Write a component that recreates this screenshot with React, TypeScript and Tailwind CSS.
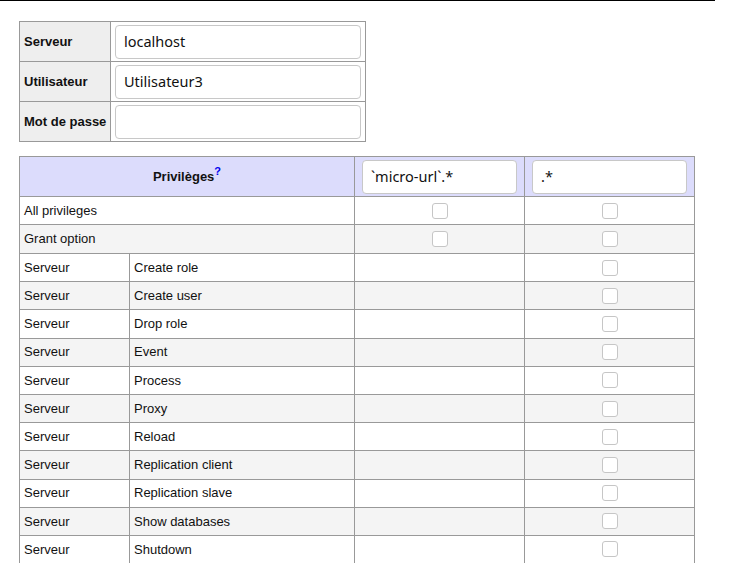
const privileges = [
  'Create role',
  'Create user',
  'Drop role',
  'Event',
  'Process',
  'Proxy',
  'Reload',
  'Replication client',
  'Replication slave',
  'Show databases',
  'Shutdown',
];

function Box() {
  return <div className="mx-auto h-[16px] w-[16px] rounded-[3px] border border-[#c6c6c6] bg-white" />;
}

function Field({ value }: { value: string }) {
  return (
    <div className="flex h-[34px] items-center rounded-[4px] border border-[#c8c8c8] bg-white px-[8px] font-['Noto_Sans',sans-serif] text-[14.5px] text-[#111]">
      {value}
    </div>
  );
}

export default function App() {
  return (
    <div className="min-h-[563px] bg-white font-['Liberation_Sans',Arial,sans-serif] text-[13px] text-[#111]">
      <div className="h-px w-[715px] bg-black" />

      <table className="ml-[19px] mt-[20px] w-[347px] table-fixed border-collapse">
        <colgroup>
          <col className="w-[91px]" />
          <col />
        </colgroup>
        <tbody>
          {[
            ['Serveur', 'localhost'],
            ['Utilisateur', 'Utilisateur3'],
            ['Mot de passe', ''],
          ].map(([label, value]) => (
            <tr key={label} className="h-[40px]">
              <th className="whitespace-nowrap border border-[#999] bg-[#eee] px-[4px] text-left font-bold">{label}</th>
              <td className="border border-[#999] px-[4px]">
                <Field value={value} />
              </td>
            </tr>
          ))}
        </tbody>
      </table>

      <table className="ml-[19px] mt-[14px] w-[676px] table-fixed border-collapse">
        <colgroup>
          <col className="w-[110px]" />
          <col className="w-[225px]" />
          <col className="w-[170px]" />
          <col className="w-[170px]" />
        </colgroup>
        <thead>
          <tr className="h-[40px] bg-[#dcdcfc]">
            <th colSpan={2} className="border border-[#999] font-bold">
              Privilèges<sup className="text-[11px] text-[#00e]">?</sup>
            </th>
            <td className="border border-[#999] px-[7px]">
              <Field value="`micro-url`.*" />
            </td>
            <td className="border border-[#999] px-[7px]">
              <Field value=".*" />
            </td>
          </tr>
        </thead>
        <tbody>
          <tr className="h-[28px] bg-white">
            <td colSpan={2} className="border border-[#999] px-[4px]">All privileges</td>
            <td className="border border-[#999]"><Box /></td>
            <td className="border border-[#999]"><Box /></td>
          </tr>
          <tr className="h-[29px] bg-[#f4f4f4]">
            <td colSpan={2} className="border border-[#999] px-[4px]">Grant option</td>
            <td className="border border-[#999]"><Box /></td>
            <td className="border border-[#999]"><Box /></td>
          </tr>
          {privileges.map((p, i) => (
            <tr key={p} className={`h-[28.2px] ${i % 2 === 0 ? 'bg-white' : 'bg-[#f4f4f4]'}`}>
              <td className="border border-[#999] px-[4px]">Serveur</td>
              <td className="border border-[#999] px-[4px]">{p}</td>
              <td className="border border-[#999]" />
              <td className="border border-[#999]"><Box /></td>
            </tr>
          ))}
        </tbody>
      </table>
    </div>
  );
}
